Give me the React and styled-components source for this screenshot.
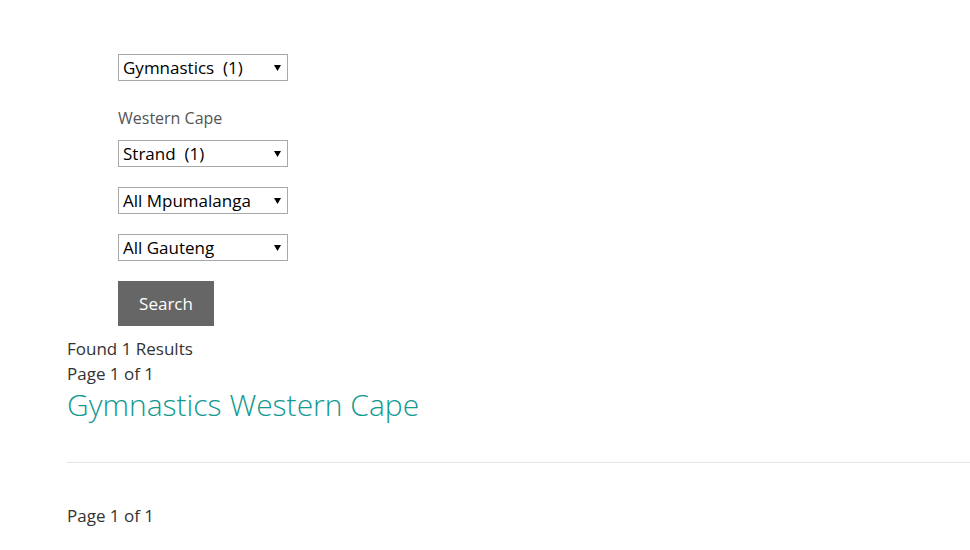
import React from "react";
import styled, { createGlobalStyle } from "styled-components";

const GlobalStyle = createGlobalStyle`
  body {
    margin: 0;
    background: #ffffff;
    font-family: "Open Sans", "Liberation Sans", sans-serif;
    color: #333333;
  }
`;

const searchFields = [
  { value: "Gymnastics\u00a0\u00a0(1)" },
  { label: "Western Cape", value: "Strand\u00a0\u00a0(1)" },
  { value: "All Mpumalanga" },
  { value: "All Gauteng" },
];

const Page = () => {
  return (
    <Container>
      <GlobalStyle />
      <form className="search-form" onSubmit={(e) => e.preventDefault()}>
        {searchFields.map((field, i) => (
          <div className="field" key={i}>
            {field.label && <label className="field-label">{field.label}</label>}
            <SelectBox>
              <select defaultValue={field.value}>
                <option>{field.value}</option>
              </select>
              <svg className="arrow" width="7" height="6" viewBox="0 0 7 6">
                <path d="M0 0h7L3.5 6z" fill="#000" />
              </svg>
            </SelectBox>
          </div>
        ))}
        <SearchButton type="submit">Search</SearchButton>
      </form>
      <div className="results">
        <p className="meta">Found 1 Results</p>
        <p className="meta">Page 1 of 1</p>
        <h2 className="result-title">
          <a href="#">Gymnastics Western Cape</a>
        </h2>
        <hr />
        <p className="meta">Page 1 of 1</p>
      </div>
    </Container>
  );
};

const SelectBox = styled.div`
  position: relative;
  width: 170px;
  height: 27px;
  select {
    appearance: none;
    -webkit-appearance: none;
    width: 100%;
    height: 100%;
    margin: 0;
    padding: 0 20px 0 4px;
    border: 1px solid #a9a9a9;
    border-radius: 0;
    background: #ffffff;
    color: #000000;
    font-family: "Open Sans", "Liberation Sans", sans-serif;
    font-size: 17px;
  }
  .arrow {
    position: absolute;
    right: 7px;
    top: 11px;
    pointer-events: none;
  }
`;

const SearchButton = styled.button`
  width: 96px;
  height: 45px;
  border: none;
  background-color: #666666;
  color: #ffffff;
  font-family: "Open Sans", "Liberation Sans", sans-serif;
  font-size: 17px;
  cursor: pointer;
`;

const Container = styled.div`
  padding: 54px 0 0 67px;
  .search-form {
    display: flex;
    flex-direction: column;
    align-items: flex-start;
    gap: 20px;
    padding-left: 51px;
  }
  .field {
    display: flex;
    flex-direction: column;
    gap: 11px;
  }
  .field + .field .field-label {
    margin-top: 6px;
  }
  .field-label {
    font-size: 16px;
    line-height: 22px;
    color: #555555;
  }
  .results {
    padding-top: 10px;
  }
  .meta {
    margin: 0;
    font-size: 17px;
    line-height: 25px;
    color: #333333;
  }
  .result-title {
    margin: 0;
    font-size: 30px;
    font-weight: 300;
    line-height: 38px;
    a {
      color: #12998f;
      text-decoration: none;
    }
  }
  hr {
    margin: 38px 0 40px;
    border: none;
    border-top: 1px solid #e5e5e5;
  }
`;

export default Page;
